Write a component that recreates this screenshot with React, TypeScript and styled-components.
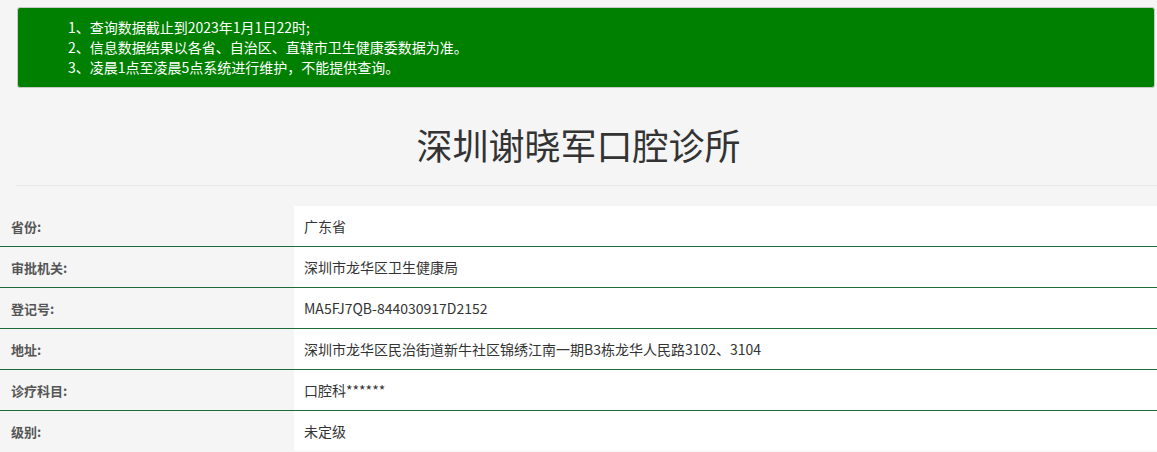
import React from "react";
import styled, { createGlobalStyle } from "styled-components";

const Global = createGlobalStyle`
  html, body { margin: 0; padding: 0; background: #f5f5f5; overflow: hidden; }
  body { font-family: "Microsoft YaHei", "Noto Sans CJK SC", sans-serif; }
`;

const Page = styled.div`
  padding: 7px 2px 0 17px;
`;

const Notice = styled.div`
  background: #008000;
  border: 1px solid #c9c9c9;
  border-radius: 3px;
  color: #fff;
  font-size: 14px;
  line-height: 20px;
  padding: 9px 0 10px 50px;
`;

const Title = styled.h1`
  margin: 0;
  padding: 34px 0 0;
  height: 56px;
  text-align: center;
  font-weight: normal;
  font-size: 36px;
  line-height: 44px;
  color: #333;
`;

const Rule = styled.div`
  margin: 7px -2px 0 -1px;
  border-top: 1px solid #e8e8e8;
`;

const Table = styled.div`
  margin-top: 20px;
`;

const Row = styled.div<{ $first?: boolean }>`
  display: grid;
  grid-template-columns: 294px 1fr;
  height: 40px;
  border-top: ${(p) => (p.$first ? "none" : "1px solid #1d6b3b")};
  font-size: 14px;
`;

const Label = styled.div`
  background: #f5f5f5;
  padding-left: 11px;
  display: flex;
  align-items: center;
  font-weight: bold;
  font-size: 13px;
  color: #555;
`;

const Value = styled.div`
  background: #fff;
  padding-left: 10px;
  display: flex;
  align-items: center;
  color: #333;
`;

const rows: [string, string][] = [
  ["省份:", "广东省"],
  ["审批机关:", "深圳市龙华区卫生健康局"],
  ["登记号:", "MA5FJ7QB-844030917D2152"],
  ["地址:", "深圳市龙华区民治街道新牛社区锦绣江南一期B3栋龙华人民路3102、3104"],
  ["诊疗科目:", "口腔科******"],
  ["级别:", "未定级"],
];

export default function App() {
  return (
    <>
      <Global />
      <Page>
        <Notice>
          <div>1、查询数据截止到2023年1月1日22时;</div>
          <div>2、信息数据结果以各省、自治区、直辖市卫生健康委数据为准。</div>
          <div>3、凌晨1点至凌晨5点系统进行维护，不能提供查询。</div>
        </Notice>
      </Page>
      <Title>深圳谢晓军口腔诊所</Title>
      <Page style={{ paddingTop: 0 }}>
        <Rule />
      </Page>
      <Table>
        {rows.map(([l, v], i) => (
          <Row key={l} $first={i === 0}>
            <Label>{l}</Label>
            <Value>{v}</Value>
          </Row>
        ))}
      </Table>
    </>
  );
}
